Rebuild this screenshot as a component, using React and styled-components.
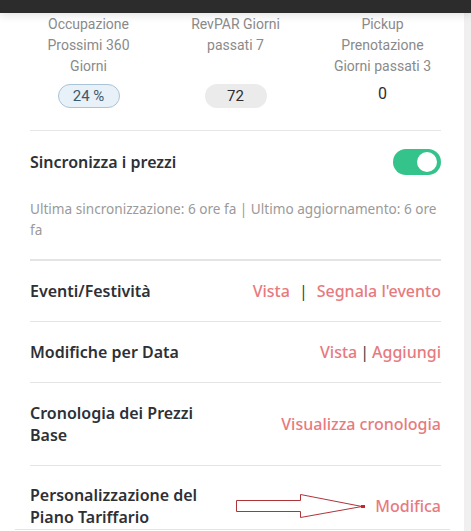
import React from 'react';
import styled, { createGlobalStyle } from 'styled-components';

const GlobalStyle = createGlobalStyle`
  html, body {
    margin: 0;
    padding: 0;
    background: #f1f1f1;
    overflow: hidden;
  }
  body {
    font-family: 'Noto Sans', 'Liberation Sans', sans-serif;
  }
`;

const Page = styled.div`
  display: flex;
  flex-direction: column;
  height: 531px;
`;

const TopBar = styled.div`
  height: 13px;
  background: #2c2c2c;
  box-shadow: 0 2px 10px rgba(0, 0, 0, 0.12);
  position: relative;
  z-index: 2;
`;

const Body = styled.div`
  display: flex;
  flex: 1;
  min-height: 0;
`;

const Card = styled.div`
  flex: 1;
  background: #fff;
  padding: 0 23px 0 30px;
  box-shadow: 1px 0 4px rgba(0, 0, 0, 0.06);
  overflow: hidden;
`;

const Gutter = styled.div`
  width: 7px;
  background: #f0f0f0;
`;

const Stats = styled.div`
  position: relative;
  display: grid;
  grid-template-columns: repeat(3, 1fr);
  margin: 0 -15px;
  padding: 1px 0 22px;
  &::after {
    content: '';
    position: absolute;
    left: 15px;
    right: 15px;
    bottom: -1px;
    height: 1px;
    background: #e6e6e6;
  }
`;

const Stat = styled.div`
  display: flex;
  flex-direction: column;
  align-items: center;
  text-align: center;
`;

const StatLabel = styled.div`
  font-family: Roboto, 'Liberation Sans', sans-serif;
  font-size: 14px;
  line-height: 21px;
  color: #8a8a8a;
  height: 63px;
  max-width: 110px;
`;

const Pill = styled.div`
  margin-top: 7px;
  width: ${(p) => (p.$plain ? 'auto' : '62px')};
  height: 24px;
  box-sizing: border-box;
  border-radius: 12px;
  display: flex;
  align-items: center;
  justify-content: center;
  font-family: Roboto, 'Liberation Sans', sans-serif;
  font-size: 15px;
  background: ${(p) => (p.$tone === 'blue' ? '#e8f1f7' : p.$plain ? 'transparent' : '#ebebeb')};
  border: ${(p) => (p.$tone === 'blue' ? '1px solid #a9c4d6' : 'none')};
  color: ${(p) => (p.$tone === 'blue' ? '#3c5a6f' : '#2e2e2e')};
  ${(p) => p.$plain && 'font-size: 16px; margin-top: 4px;'}
`;

const SyncBlock = styled.div`
  padding: 19px 0 19px;
  border-bottom: 2px solid #e4e4e4;
`;

const SyncHead = styled.div`
  display: flex;
  align-items: center;
  justify-content: space-between;
  height: 26px;
`;

const Title = styled.div`
  font-size: 16px;
  font-weight: 600;
  line-height: 22px;
  color: #2d3136;
  max-width: ${(p) => p.$max || 'none'};
`;

const Toggle = styled.div`
  width: 48px;
  height: 26px;
  border-radius: 13px;
  background: #33c38b;
  display: flex;
  align-items: center;
  justify-content: flex-end;
  padding: 0 4px;
  box-sizing: border-box;
  &::after {
    content: '';
    width: 20px;
    height: 20px;
    border-radius: 50%;
    background: #fff;
  }
`;

const Note = styled.div`
  margin-top: 23px;
  font-size: 13.6px;
  line-height: 21px;
  color: #9a9a9a;
`;

const Row = styled.div`
  position: relative;
  display: flex;
  align-items: center;
  justify-content: space-between;
  padding: ${(p) => (p.$last ? '18px 0 0' : '19px 0')};
  border-bottom: 1px solid ${(p) => (p.$last ? 'transparent' : '#e4e4e4')};
`;

const Links = styled.div`
  display: flex;
  align-items: center;
  font-size: 16px;
  font-weight: 500;
  line-height: 22px;
  color: #e77a7e;
  white-space: nowrap;
`;

const Sep = styled.span`
  color: #3a3f44;
  margin: 0 ${(p) => p.$gap || 3}px;
  font-weight: 400;
`;

const BottomLine = styled.div`
  height: 1px;
  background: #e4e4e4;
  margin: 0 -9px 0 -15px;
`;

const Arrow = styled.svg`
  position: absolute;
  left: 206px;
  top: 28px;
`;

export default function App() {
  return (
    <Page>
      <GlobalStyle />
      <TopBar />
      <Body>
        <Card>
          <Stats>
            <Stat>
              <StatLabel>Occupazione Prossimi 360 Giorni</StatLabel>
              <Pill $tone="blue">24 %</Pill>
            </Stat>
            <Stat>
              <StatLabel>RevPAR Giorni passati 7</StatLabel>
              <Pill>72</Pill>
            </Stat>
            <Stat>
              <StatLabel>Pickup Prenotazione Giorni passati 3</StatLabel>
              <Pill $plain>0</Pill>
            </Stat>
          </Stats>

          <SyncBlock>
            <SyncHead>
              <Title>Sincronizza i prezzi</Title>
              <Toggle />
            </SyncHead>
            <Note>Ultima sincronizzazione: 6 ore fa | Ultimo aggiornamento: 6 ore fa</Note>
          </SyncBlock>

          <Row>
            <Title>Eventi/Festività</Title>
            <Links>
              Vista<Sep $gap={9}>|</Sep>Segnala l'evento
            </Links>
          </Row>
          <Row>
            <Title>Modifiche per Data</Title>
            <Links>
              Vista<Sep>|</Sep>Aggiungi
            </Links>
          </Row>
          <Row>
            <Title $max="190px">Cronologia dei Prezzi Base</Title>
            <Links>Visualizza cronologia</Links>
          </Row>
          <Row $last>
            <Title $max="190px">Personalizzazione del Piano Tariffario</Title>
            <Links>Modifica</Links>
            <Arrow width="132" height="26" viewBox="0 0 132 26">
              <polygon
                points="0.5,6.5 64.5,6.5 64.5,0.5 126,12.5 64.5,23.5 64.5,17.5 0.5,17.5"
                fill="none"
                stroke="#b03338"
                strokeWidth="1"
              />
              <rect x="125" y="11" width="4" height="3" fill="#c7262c" />
            </Arrow>
          </Row>
          <BottomLine />
        </Card>
        <Gutter />
      </Body>
    </Page>
  );
}
